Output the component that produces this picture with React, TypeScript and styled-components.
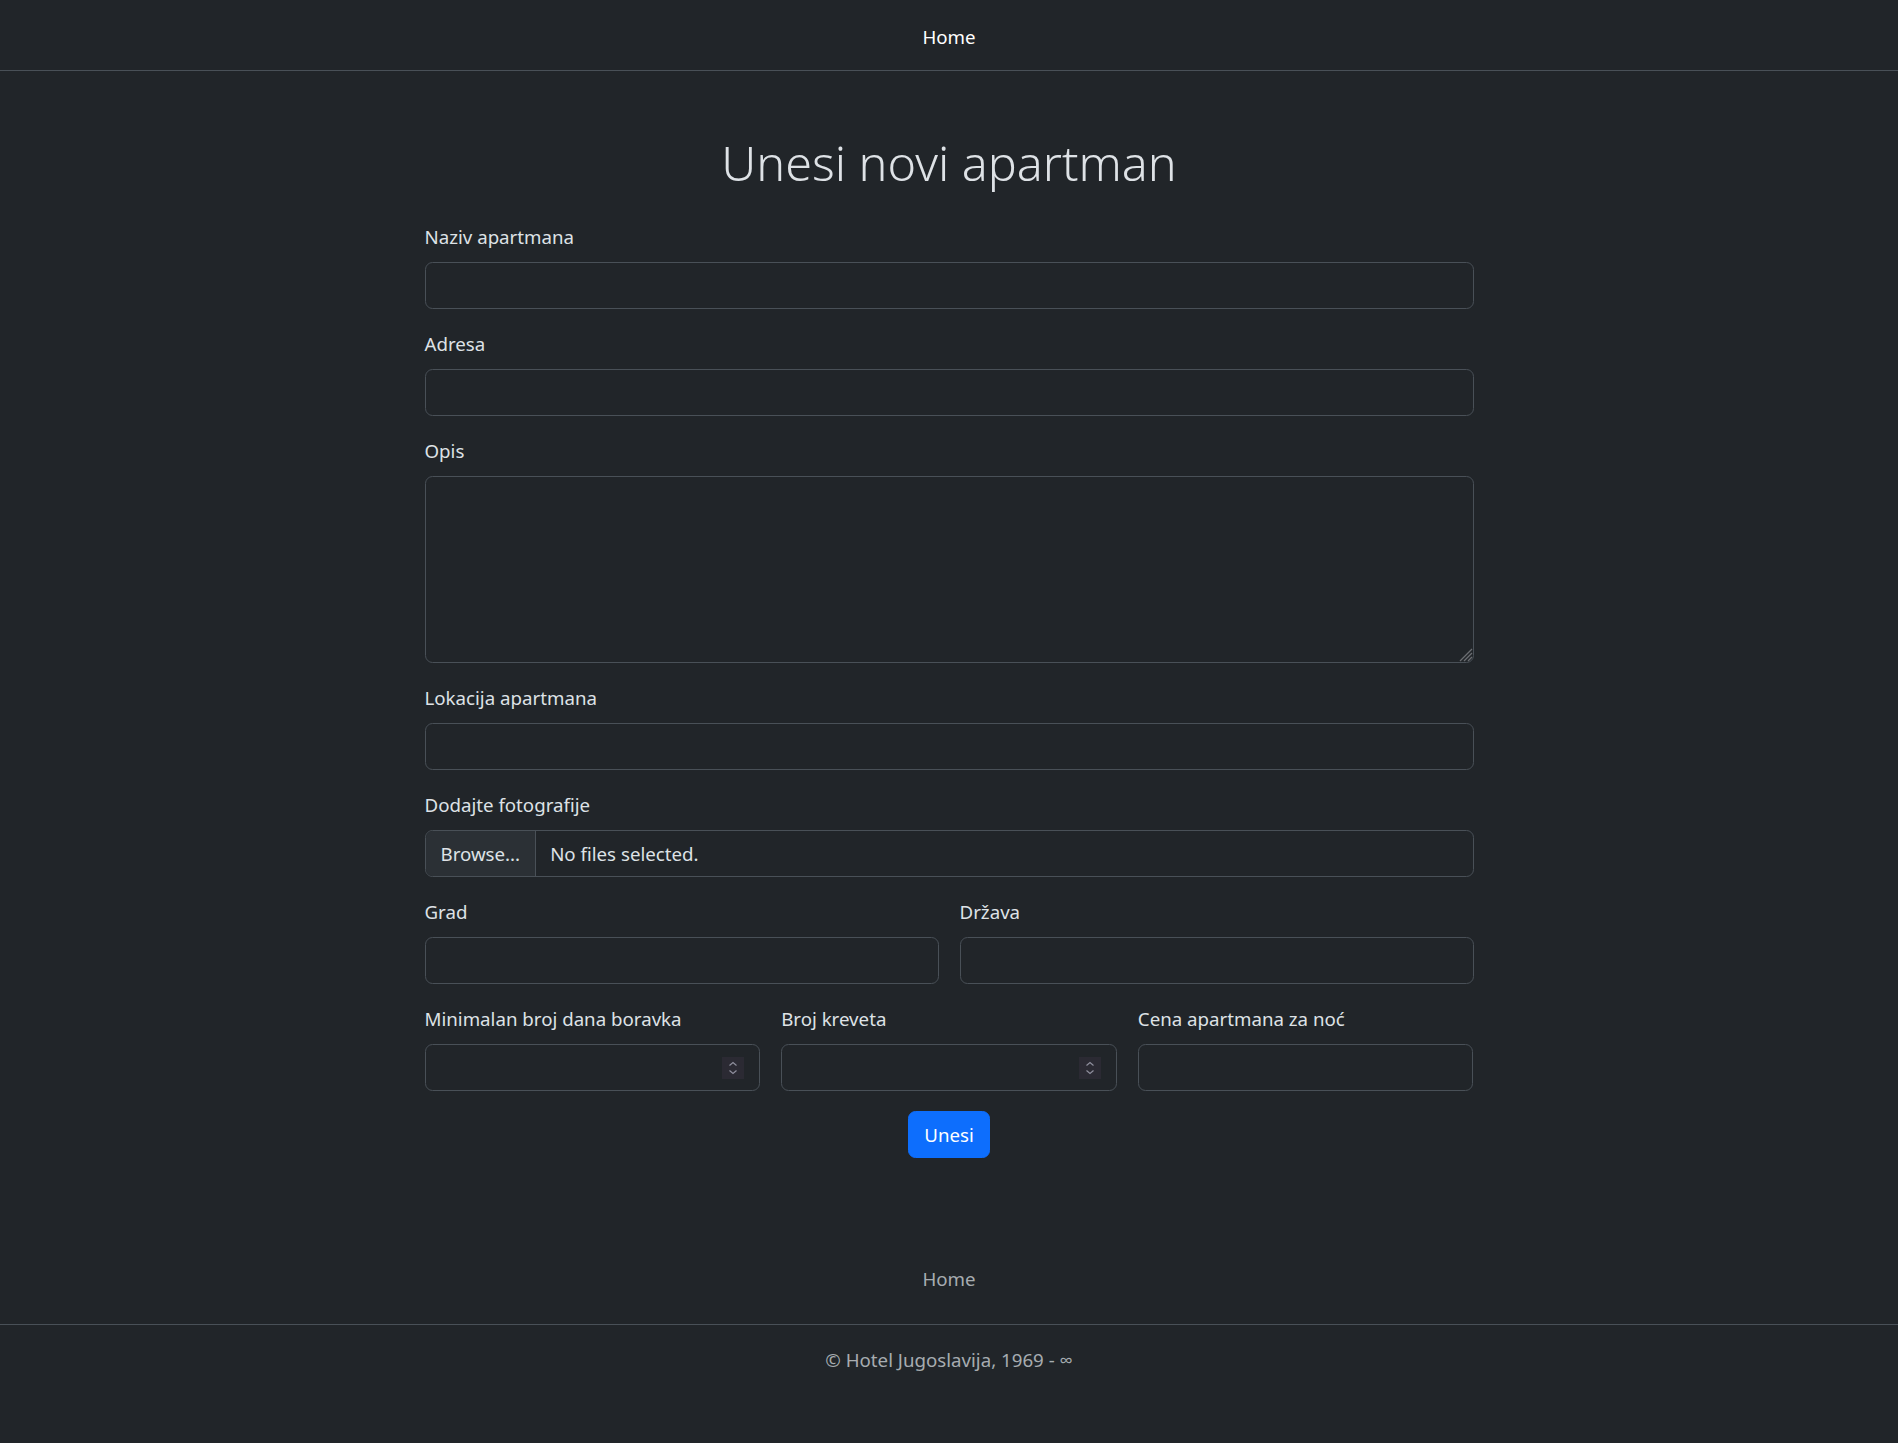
import React from 'react';
import styled, { createGlobalStyle } from 'styled-components';

const GlobalStyle = createGlobalStyle`
  html, body {
    margin: 0;
    padding: 0;
  }
  body {
    background: #212529;
    color: #dee2e6;
    font-family: "Noto Sans", "Open Sans", sans-serif;
    font-size: 18.7px;
    line-height: 30px;
  }
  *, *::before, *::after {
    box-sizing: border-box;
  }
`;

const Header = styled.header`
  height: 71px;
  padding-top: 3px;
  border-bottom: 1px solid #495057;
  display: flex;
  align-items: center;
  justify-content: center;
`;

const NavLink = styled.a<{ $muted?: boolean }>`
  padding: 0 10px;
  line-height: 30px;
  color: ${(p) => (p.$muted ? 'rgba(222, 226, 230, 0.72)' : '#ffffff')};
  text-decoration: none;
`;

const Main = styled.main`
  width: 1049px;
  margin: 0 auto;
`;

const Title = styled.h1`
  margin: 60px 0 29px;
  text-align: center;
  font-size: 48.5px;
  font-weight: 300;
  line-height: 62px;
  color: #dee2e6;
`;

const FieldGroup = styled.div`
  margin-bottom: 20px;
  min-width: 0;
`;

const Label = styled.label`
  display: block;
  margin-bottom: 10px;
  line-height: 30px;
  color: #dee2e6;
`;

const Input = styled.input`
  display: block;
  width: 100%;
  height: 47px;
  padding: 7.5px 15px;
  font: inherit;
  color: #dee2e6;
  background: #212529;
  border: 1px solid #495057;
  border-radius: 7.5px;
  outline: none;
`;

const TextAreaWrap = styled.div`
  position: relative;
`;

const TextArea = styled.textarea`
  display: block;
  width: 100%;
  height: 187px;
  padding: 7.5px 15px;
  font: inherit;
  color: #dee2e6;
  background: #212529;
  border: 1px solid #495057;
  border-radius: 7.5px;
  outline: none;
  resize: none;
`;

const Grip = styled.svg`
  position: absolute;
  right: 1px;
  bottom: 1px;
`;

const FileBox = styled.div`
  display: flex;
  height: 47px;
  border: 1px solid #495057;
  border-radius: 7.5px;
  overflow: hidden;
`;

const BrowseButton = styled.span`
  display: flex;
  align-items: center;
  padding: 0 15px;
  background: #2b3035;
  border-right: 1px solid #495057;
  color: #dee2e6;
`;

const FileName = styled.span`
  display: flex;
  align-items: center;
  padding: 0 14px;
  color: #dee2e6;
`;

const Row = styled.div<{ $cols: number }>`
  display: grid;
  grid-template-columns: repeat(${(p) => p.$cols}, 1fr);
  column-gap: 21px;
`;

const NumberWrap = styled.div`
  position: relative;
`;

const Spinner = styled.svg`
  position: absolute;
  right: 16px;
  top: 13px;
`;

const Actions = styled.div`
  display: flex;
  justify-content: center;
`;

const SubmitButton = styled.button`
  height: 47px;
  padding: 0 15px;
  font: inherit;
  line-height: 30px;
  color: #ffffff;
  background: #0d6efd;
  border: 1px solid #0d6efd;
  border-radius: 7.5px;
  cursor: pointer;
`;

const Footer = styled.footer`
  margin-top: 96px;
`;

const FooterNav = styled.nav`
  display: flex;
  justify-content: center;
  padding: 10px 0 30px;
  border-bottom: 1px solid #495057;
`;

const Copyright = styled.p`
  margin: 20px 0 0;
  padding-bottom: 58px;
  text-align: center;
  line-height: 30px;
  color: rgba(222, 226, 230, 0.72);
`;

const TextField: React.FC<{ label: string }> = ({ label }) => (
  <FieldGroup>
    <Label>{label}</Label>
    <Input type="text" />
  </FieldGroup>
);

const NumberField: React.FC<{ label: string }> = ({ label }) => (
  <FieldGroup>
    <Label>{label}</Label>
    <NumberWrap>
      <Input type="text" inputMode="numeric" />
      <Spinner width="22" height="22" viewBox="0 0 22 22">
        <rect width="22" height="22" fill="#2b2a33" />
        <path d="M7.5 8.5 L11 5.5 L14.5 8.5" fill="none" stroke="#8f8f9d" strokeWidth="1.2" />
        <path d="M7.5 13.5 L11 16.5 L14.5 13.5" fill="none" stroke="#8f8f9d" strokeWidth="1.2" />
      </Spinner>
    </NumberWrap>
  </FieldGroup>
);

const App: React.FC = () => {
  return (
    <>
      <GlobalStyle />
      <Header>
        <NavLink href="#">Home</NavLink>
      </Header>

      <Main>
        <Title>Unesi novi apartman</Title>

        <TextField label="Naziv apartmana" />
        <TextField label="Adresa" />

        <FieldGroup>
          <Label>Opis</Label>
          <TextAreaWrap>
            <TextArea />
            <Grip width="16" height="16" viewBox="0 0 16 16">
              <path
                d="M15 3 L3 15 M15 7 L7 15 M15 11 L11 15"
                stroke="#6b6e72"
                strokeWidth="1.3"
              />
            </Grip>
          </TextAreaWrap>
        </FieldGroup>

        <TextField label="Lokacija apartmana" />

        <FieldGroup>
          <Label>Dodajte fotografije</Label>
          <FileBox>
            <BrowseButton>Browse...</BrowseButton>
            <FileName>No files selected.</FileName>
          </FileBox>
        </FieldGroup>

        <Row $cols={2}>
          <TextField label="Grad" />
          <TextField label="Država" />
        </Row>

        <Row $cols={3}>
          <NumberField label="Minimalan broj dana boravka" />
          <NumberField label="Broj kreveta" />
          <TextField label="Cena apartmana za noć" />
        </Row>

        <Actions>
          <SubmitButton type="button">Unesi</SubmitButton>
        </Actions>
      </Main>

      <Footer>
        <FooterNav>
          <NavLink href="#" $muted>
            Home
          </NavLink>
        </FooterNav>
        <Copyright>© Hotel Jugoslavija, 1969 - ∞</Copyright>
      </Footer>
    </>
  );
};

export default App;
